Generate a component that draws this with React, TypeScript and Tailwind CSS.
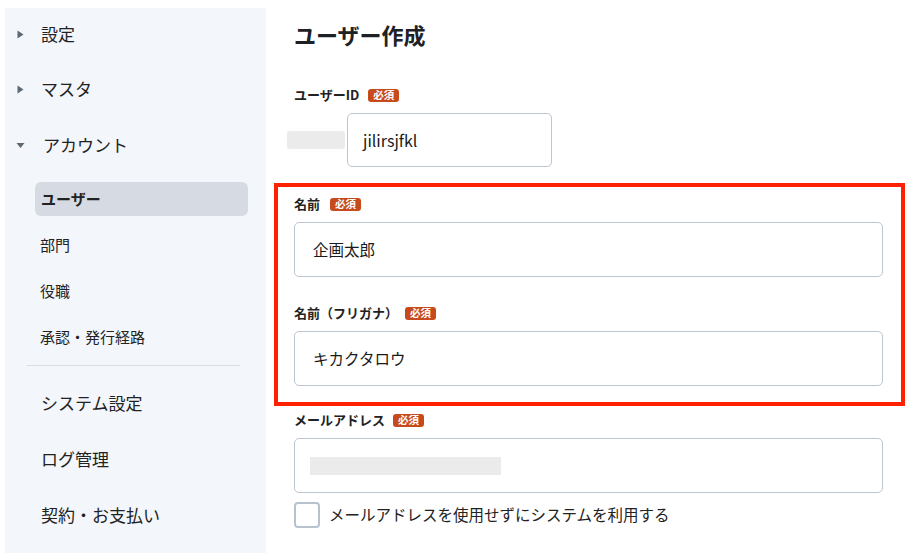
import React from "react";

const Badge = ({ ml = "ml-[10px]" }: { ml?: string }) => (
  <span
    className={`${ml} inline-flex h-[13px] w-[31px] items-center justify-center rounded-[3px] bg-[#c64a1c] text-[10.5px] font-bold leading-none text-white`}
  >
    必須
  </span>
);

const Tri = ({ down = false }: { down?: boolean }) =>
  down ? (
    <svg width="9" height="7" viewBox="0 0 9 7" className="mr-[18px] ml-[-1px]">
      <path d="M0.5 1 L8.5 1 L4.5 6 Z" fill="#5d6873" />
    </svg>
  ) : (
    <svg width="7" height="9" viewBox="0 0 7 9" className="mr-[17px]">
      <path d="M0.5 0.5 L6.5 4.5 L0.5 8.5 Z" fill="#5d6873" />
    </svg>
  );

const Field = ({
  label,
  badgeMl,
  value,
  className = "",
}: {
  label: string;
  badgeMl?: string;
  value: React.ReactNode;
  className?: string;
}) => (
  <div className={className}>
    <div className="flex h-[20px] items-center text-[13px] font-bold leading-[20px] text-[#222]">
      <span>{label}</span>
      <Badge ml={badgeMl} />
    </div>
    <div className="mt-[8px] flex h-[55px] w-[589px] items-center rounded-[5px] border border-[#bcc5d1] bg-white px-[18px] text-[15.5px] text-[#1a1a1a]">
      {value}
    </div>
  </div>
);

export default function App() {
  return (
    <div
      className="flex h-[554px] w-[910px] bg-white pl-[5px] pt-[8px]"
      style={{ fontFamily: '"Noto Sans CJK JP", "Noto Sans", sans-serif' }}
    >
      {/* Sidebar */}
      <aside className="h-[545px] w-[261px] shrink-0 bg-[#f3f6fa] pt-[10px] text-[#222]">
        <div className="flex h-[32px] items-center pl-[12px] text-[17px] leading-[32px]">
          <Tri />
          <span>設定</span>
        </div>
        <div className="mt-[23px] flex h-[32px] items-center pl-[12px] text-[17px] leading-[32px]">
          <Tri />
          <span>マスタ</span>
        </div>
        <div className="mt-[24px] flex h-[32px] items-center pl-[12px] text-[17px] leading-[32px]">
          <Tri down />
          <span>アカウント</span>
        </div>
        <div className="mt-[21px] ml-[30px] flex h-[34px] w-[213px] items-center rounded-[6px] bg-[#d6dbe3] pl-[6px] text-[15px] font-bold">
          ユーザー
        </div>
        <div className="mt-[12px] flex h-[34px] items-center pl-[35px] text-[15px]">部門</div>
        <div className="mt-[12px] flex h-[34px] items-center pl-[35px] text-[15px]">役職</div>
        <div className="mt-[12px] flex h-[34px] items-center pl-[35px] text-[15px]">
          承認・発行経路
        </div>
        <div className="mt-[11px] ml-[22px] h-px w-[213px] bg-[#d8dde4]" />
        <div className="mt-[21px] flex h-[32px] items-center pl-[36px] text-[17px]">
          システム設定
        </div>
        <div className="mt-[24px] flex h-[32px] items-center pl-[36px] text-[17px]">ログ管理</div>
        <div className="mt-[24px] flex h-[32px] items-center pl-[36px] text-[17px]">
          契約・お支払い
        </div>
      </aside>

      {/* Main */}
      <main className="ml-[28px] flex-1 pt-[12px]">
        <h1 className="h-[28px] text-[22px] font-bold leading-[28px] text-[#1d2125]">
          ユーザー作成
        </h1>

        <div className="mt-[37px]">
          <div className="flex h-[20px] items-center text-[13px] font-bold leading-[20px] text-[#222]">
            <span>ユーザーID</span>
            <Badge ml="ml-[9px]" />
          </div>
          <div className="mt-[8px] flex items-center">
            <div className="ml-[-7px] h-[18px] w-[58px] rounded-[2px] bg-[#ebebeb]" />
            <div className="ml-[2px] flex h-[54px] w-[205px] items-center rounded-[5px] border border-[#bcc5d1] bg-white px-[15px] text-[16px] text-[#1a1a1a]">
              jilirsjfkl
            </div>
          </div>
        </div>

        <div className="mt-[16px] ml-[-20px] w-[631px] border-4 border-[#ff2200] pl-[16px] pt-[7px] pb-[16px]">
          <Field label="名前" value="企画太郎" />
          <Field
            label="名前（フリガナ）"
            badgeMl="ml-[7px]"
            value="キカクタロウ"
            className="mt-[26px]"
          />
        </div>

        <Field
          label="メールアドレス"
          badgeMl="ml-[8px]"
          className="mt-[4px]"
          value={
            <div className="ml-[-3px] h-[18px] w-[191px] bg-[#ebebeb]" />
          }
        />

        <label className="mt-[9px] flex items-center">
          <span className="h-[26px] w-[26px] rounded-[4px] border-2 border-[#b8c2cf] bg-white" />
          <span className="ml-[9px] text-[15.5px] text-[#222]">
            メールアドレスを使用せずにシステムを利用する
          </span>
        </label>
      </main>
    </div>
  );
}
